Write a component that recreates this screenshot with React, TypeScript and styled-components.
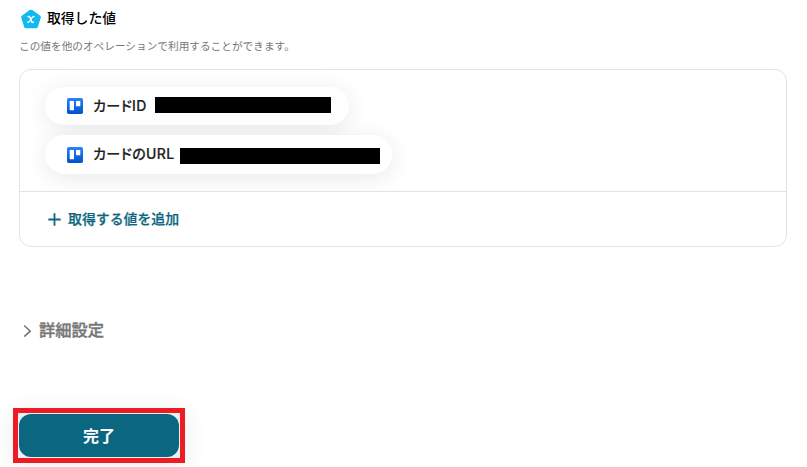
import React from 'react';
import styled, { createGlobalStyle } from 'styled-components';

const GlobalStyle = createGlobalStyle`
  * { box-sizing: border-box; }
  body {
    margin: 0;
    background: #fff;
    overflow: hidden;
    font-family: "Noto Sans CJK JP", sans-serif;
  }
`;

const Page = styled.main`
  width: 807px;
  height: 467px;
  padding: 8px 20px 0 19px;
  overflow: hidden;
`;

const Heading = styled.header`
  display: flex;
  align-items: center;
  gap: 6px;
  height: 21px;
  padding-left: 2px;
`;

const Title = styled.h2`
  margin: 0;
  padding-bottom: 4px;
  font-size: 13.8px;
  font-weight: 500;
  line-height: 20px;
  color: #000;
`;

const Description = styled.p`
  margin: 9px 0 15px;
  font-size: 10.67px;
  line-height: 16px;
  color: #777;
`;

const Card = styled.section`
  height: 178px;
  border: 1px solid #e3e3e3;
  border-radius: 12px;
  overflow: hidden;
`;

const PillList = styled.div`
  display: flex;
  flex-direction: column;
  align-items: flex-start;
  gap: 10px;
  height: 122px;
  padding: 17px 25px 0;
  border-bottom: 1px solid #e3e3e3;
  overflow: hidden;
`;

const Pill = styled.div<{ $width: number; $height: number }>`
  display: flex;
  align-items: center;
  width: ${(p) => p.$width}px;
  height: ${(p) => p.$height}px;
  padding-left: 22px;
  border-radius: 20px;
  background: #fff;
  box-shadow: 0 4px 24px rgba(0, 0, 0, 0.09);
`;

const PillLabel = styled.span<{ $width: number }>`
  width: ${(p) => p.$width}px;
  margin-left: 10px;
  padding-bottom: 1px;
  font-family: Inter, "Noto Sans CJK JP", sans-serif;
  font-size: 14px;
  font-weight: 500;
  line-height: 20px;
  letter-spacing: 0.42px;
  font-feature-settings: "palt";
  -webkit-text-stroke: 0.2px currentColor;
  white-space: nowrap;
  color: #222;
`;

const Redaction = styled.span<{ $width: number; $drop: number }>`
  width: ${(p) => p.$width}px;
  height: 16px;
  margin-top: ${(p) => p.$drop}px;
  background: #000;
`;

const AddButton = styled.button`
  display: flex;
  align-items: center;
  gap: 7px;
  height: 54px;
  padding: 0 0 0 28px;
  border: 0;
  background: none;
  font: 500 13.9px/20px "Noto Sans CJK JP", sans-serif;
  color: #0b6780;
`;

const AddLabel = styled.span`
  padding-bottom: 2px;
  -webkit-text-stroke: 0.25px currentColor;
`;

const Details = styled.button`
  display: flex;
  align-items: center;
  gap: 7px;
  height: 24px;
  margin-top: 71px;
  padding: 0 0 0 4px;
  border: 0;
  background: none;
  font: 500 16.3px/24px "Noto Sans CJK JP", sans-serif;
  color: #777;
`;

const DetailsLabel = styled.span`
  padding-bottom: 2px;
  -webkit-text-stroke: 0.35px currentColor;
`;

const Highlight = styled.div`
  width: 172px;
  height: 55px;
  margin: 66px 0 0 -6px;
  padding: 1px;
  border: 5px solid #ed1c24;
  background: #e9eff2;
  box-shadow: 0 4px 24px rgba(11, 50, 70, 0.09);
`;

const DoneButton = styled.button`
  display: block;
  width: 160px;
  height: 43px;
  padding: 0 0 2px;
  border: 0;
  border-radius: 12px;
  background: #0b6780;
  font: 700 16px/24px "Noto Sans CJK JP", sans-serif;
  color: #fff;
`;

const ValueIcon = () => (
  <svg width="20" height="20" viewBox="0 0 20 20">
    <path
      d="M8.7 1.1Q10 .2 11.3 1.1L18.9 6.5Q20.2 7.4 19.7 8.9L16.9 17.8Q16.4 19.3 14.8 19.3H5.2Q3.6 19.3 3.1 17.8L.3 8.9Q-.2 7.4 1.1 6.5Z"
      fill="#12b9ee"
    />
    <path
      d="M7.2 7.6Q8.6 7 9.2 8.8L10.3 12Q10.9 13.9 12.4 13.1"
      fill="none"
      stroke="#fff"
      strokeWidth="1.6"
      strokeLinecap="round"
    />
    <path
      d="M13 7.5Q11.9 7.5 10.8 9L8.8 12Q7.7 13.6 6.6 13.3"
      fill="none"
      stroke="#fff"
      strokeWidth="1.3"
      strokeLinecap="round"
    />
  </svg>
);

const TrelloIcon = ({ id }: { id: string }) => (
  <svg width="16" height="16" viewBox="0 0 16 16">
    <defs>
      <linearGradient id={id} x1="0" y1="0" x2="0" y2="1">
        <stop offset="0" stopColor="#2684ff" />
        <stop offset="1" stopColor="#0052cc" />
      </linearGradient>
    </defs>
    <rect width="16" height="16" rx="1.8" fill={`url(#${id})`} />
    <rect x="2.7" y="3" width="4.3" height="9.3" rx=".5" fill="#fff" />
    <rect x="9" y="3" width="4.3" height="5.3" rx=".5" fill="#fff" />
  </svg>
);

const PlusIcon = () => (
  <svg width="13" height="13" viewBox="0 0 13 13">
    <path d="M6.5 .3V12.7M.3 6.5H12.7" stroke="#0b6780" strokeWidth="1.8" />
  </svg>
);

const ChevronIcon = () => (
  <svg width="9" height="14" viewBox="0 0 9 14">
    <path d="M1.2 2.5L7.2 8.2L1.2 13.6" fill="none" stroke="#777" strokeWidth="1.6" />
  </svg>
);

export default function App() {
  return (
    <>
      <GlobalStyle />
      <Page>
        <Heading>
          <ValueIcon />
          <Title>取得した値</Title>
        </Heading>
        <Description>この値を他のオペレーションで利用することができます。</Description>
        <Card>
          <PillList>
            <Pill $width={304} $height={38}>
              <TrelloIcon id="trello-card" />
              <PillLabel $width={62}>カードID</PillLabel>
              <Redaction $width={176} $drop={-2} />
            </Pill>
            <Pill $width={347} $height={39}>
              <TrelloIcon id="trello-url" />
              <PillLabel $width={87}>カードのURL</PillLabel>
              <Redaction $width={200} $drop={2} />
            </Pill>
          </PillList>
          <AddButton>
            <PlusIcon />
            <AddLabel>取得する値を追加</AddLabel>
          </AddButton>
        </Card>
        <Details>
          <ChevronIcon />
          <DetailsLabel>詳細設定</DetailsLabel>
        </Details>
        <Highlight>
          <DoneButton>完了</DoneButton>
        </Highlight>
      </Page>
    </>
  );
}
